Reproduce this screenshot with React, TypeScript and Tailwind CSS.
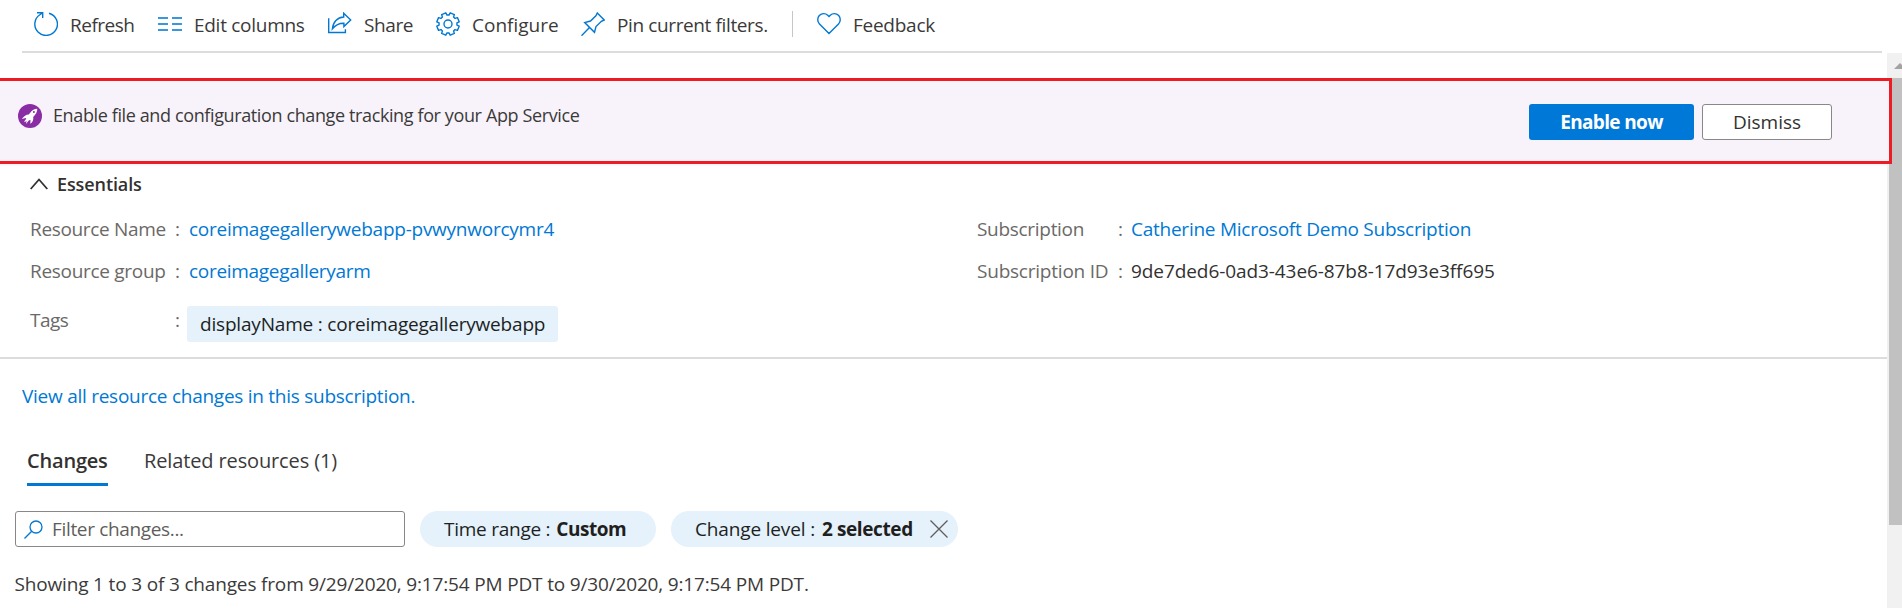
import type { ReactNode } from "react";

const gearPath = (() => {
  const pts: string[] = [];
  const at = (r: number, deg: number) => {
    const a = (deg * Math.PI) / 180;
    return `${(12 + r * Math.cos(a)).toFixed(2)} ${(12 + r * Math.sin(a)).toFixed(2)}`;
  };
  for (let i = 0; i < 8; i++) {
    const c = 22.5 + i * 45;
    pts.push(at(9, c - 16), at(11.4, c - 11.5), at(11.4, c + 11.5), at(9, c + 16));
  }
  return `M${pts.join("L")}Z`;
})();

const svgProps = {
  width: 24,
  height: 24,
  viewBox: "0 0 24 24",
  fill: "none",
  stroke: "#0078d4",
  strokeWidth: 1.4,
  className: "shrink-0",
};

const RefreshIcon = () => (
  <svg {...svgProps}>
    <path d="M15 1.2A11.3 11.3 0 1 1 6.2 2.5L8.6 1M3 .8H8.7V6" />
  </svg>
);

const ColumnsIcon = () => (
  <svg {...svgProps} stroke="#3a96dd" strokeWidth={1.8}>
    <path d="M0 6H10M14 6H24M0 12H10M14 12H24M0 18H10M14 18H24" />
  </svg>
);

const ShareIcon = () => (
  <svg {...svgProps}>
    <path d="M.7 6.3V20.5H17.4V17.3" />
    <path d="M15.7 1.3L22.7 8L15.9 14.6V11.2C10.6 11 7.6 13 4.4 16.8C5 10 9.4 5.4 15.7 5Z" />
  </svg>
);

const GearIcon = () => (
  <svg {...svgProps} strokeLinejoin="round">
    <path d={gearPath} />
    <circle cx="12" cy="12" r="4" />
  </svg>
);

const PinIcon = () => (
  <svg {...svgProps}>
    <path d="M.5 23.7L8.5 15.6M16.3 1L23.2 8L20.4 9.3L15 14.6L13.5 20.3L3.7 10.5L9.5 9L14.9 3.8Z" />
  </svg>
);

const HeartIcon = () => (
  <svg {...svgProps}>
    <path d="M12 21.6L2.5 12C.2 9.500 .2 5.800 2.300 3.500C4.800 .9 8.600 1.100 10.700 3.200L12 4.500L13.300 3.200C15.400 1.100 19.200 .9 21.700 3.500C23.800 5.800 23.800 9.500 21.500 12Z" />
  </svg>
);

const RocketIcon = () => (
  <svg width="24" height="24" viewBox="0 0 24 24" className="shrink-0">
    <circle cx="12" cy="12" r="12" fill="#8a2da5" />
    <path
      fill="#fff"
      d="M19.300 4.800C16.500 4.800 14.200 6.200 12 8.900L10.800 10.400C8.400 10.300 5.800 12 3.800 15L7.800 14L8.300 14.900C6.800 16 6.400 17.300 6.300 18.200L8.600 16.900L7.900 20L11 16.300L12.500 15.900L12.300 19.800C14.800 18 15.700 15.600 15.200 12.900C17.700 10.700 19.300 8 19.300 4.800Z"
    />
    <circle cx="15.9" cy="8.1" r="1" fill="#8a2da5" />
  </svg>
);

function Command({ icon, label, className }: { icon: ReactNode; label: string; className: string }) {
  return (
    <button className={`flex shrink-0 items-center gap-3 whitespace-nowrap text-[#3b3a39] ${className}`}>
      {icon}
      <span className="pt-px">{label}</span>
    </button>
  );
}

export default function App() {
  return (
    <div className="flex h-[608px] w-[1902px] flex-col overflow-hidden bg-white font-['Open_Sans',sans-serif] text-[19px] leading-[26px] whitespace-nowrap text-[#323130]">
      <header className="ml-[22px] flex h-[53px] w-[1860px] shrink-0 border-b-2 border-[#dcdcdc] pl-3">
        <div className="flex h-12 items-center">
          <Command className="w-[124px] tracking-[-0.5px]" icon={<RefreshIcon />} label="Refresh" />
          <Command className="w-[170px] tracking-[-0.28px]" icon={<ColumnsIcon />} label="Edit columns" />
          <Command className="w-[108px] tracking-[-0.4px]" icon={<ShareIcon />} label="Share" />
          <Command className="w-[145px]" icon={<GearIcon />} label="Configure" />
          <Command className="w-[211px] tracking-[-0.38px]" icon={<PinIcon />} label="Pin current filters." />
          <span className="h-[26px] w-px bg-[#c8c6c4]" />
          <Command className="ml-6 tracking-[-0.26px]" icon={<HeartIcon />} label="Feedback" />
        </div>
      </header>

      <div className="flex min-h-0 flex-1">
        <main className="w-[1887px] shrink-0 pt-[25px]">
          <section className="relative z-10 h-[86px] w-[1892px] border-[3px] border-l-0 border-[#ed1c24] bg-[#f8f3fb]">
            <div className="flex h-full items-start pl-[18px]">
              <div className="mt-[23px] flex h-6 items-center gap-[11px]">
                <RocketIcon />
                <span className="pb-0.5 text-[18px] tracking-[-0.38px] text-[#3b3a39]">
                  Enable file and configuration change tracking for your App Service
                </span>
              </div>
              <div className="mt-[23px] mr-[57px] ml-auto flex gap-2">
                <button className="h-9 w-[165px] rounded-[3px] bg-[#0078d7] font-bold tracking-[-0.65px] text-white">
                  Enable now
                </button>
                <button className="h-9 w-[130px] rounded-[3px] border border-[#8a8886] bg-white">Dismiss</button>
              </div>
            </div>
          </section>

          <section className="h-[195px] border-t-2 border-b-2 border-t-[#f9f7fb] border-b-[#dcdcdc] pl-[30px]">
            <h2 className="flex h-[36px] items-center gap-[9px] text-[18px] font-semibold tracking-[-0.1px]">
              <svg width="18" height="12" viewBox="0 0 18 12" fill="none" stroke="#323130" strokeWidth="1.800">
                <path d="M.7 11L9 1.500L17.300 11" />
              </svg>
              Essentials
            </h2>
            <div className="flex pt-[7px]">
              <dl className="grid w-[947px] grid-cols-[150px_1fr] grid-rows-[42px_52px_36px]">
                <dt className="flex h-10 items-center justify-between text-[#6b6967]">
                  <span className="tracking-[-0.34px]">Resource Name</span>:
                </dt>
                <dd className="flex h-10 items-center pl-[9px] tracking-[-0.25px] text-[#0078d4]">
                  coreimagegallerywebapp-pvwynworcymr4
                </dd>
                <dt className="flex h-10 items-center justify-between text-[#6b6967]">
                  <span className="tracking-[-0.3px]">Resource group</span>:
                </dt>
                <dd className="flex h-10 items-center pl-[9px] tracking-[-0.3px] text-[#0078d4]">coreimagegalleryarm</dd>
                <dt className="flex h-8 items-center justify-between pt-px text-[#6b6967]">
                  <span className="tracking-[-0.5px]">Tags</span>:
                </dt>
                <dd className="mt-[3px] ml-[7px] flex h-9 w-[371px] items-center rounded-[3px] bg-[#e5f1fb] pl-[13px] tracking-[-0.19px] text-[#201f1e]">
                  displayName : coreimagegallerywebapp
                </dd>
              </dl>
              <dl className="grid grid-cols-[146px_1fr] grid-rows-[42px_52px]">
                <dt className="flex h-10 items-center justify-between text-[#6b6967]">
                  <span className="tracking-[-0.3px]">Subscription</span>:
                </dt>
                <dd className="flex h-10 items-center pl-2 tracking-[-0.25px] text-[#0078d4]">
                  Catherine Microsoft Demo Subscription
                </dd>
                <dt className="flex h-10 items-center justify-between text-[#6b6967]">
                  <span className="tracking-[-0.22px]">Subscription ID</span>:
                </dt>
                <dd className="flex h-10 items-center pl-2 tracking-[-0.08px]">9de7ded6-0ad3-43e6-87b8-17d93e3ff695</dd>
              </dl>
            </div>
          </section>

          <a className="mt-6 ml-[22px] block w-max tracking-[-0.26px] text-[#0078d4]">
            View all resource changes in this subscription.
          </a>

          <nav className="mt-[35px] ml-[27px] flex h-[42px] gap-9 text-[20px] leading-[33px]">
            <span className="w-[81px] border-b-[3px] border-[#0078d4] font-semibold tracking-[-0.2px]">Changes</span>
            <span className="tracking-[-0.13px] text-[#3b3a39]">Related resources (1)</span>
          </nav>

          <div className="mt-[25px] ml-[15px] flex h-9">
            <div className="flex w-[390px] items-center gap-[9px] rounded-[3px] border border-[#8a8886] pl-2 tracking-[-0.34px] text-[#605e5c]">
              <svg width="19" height="19" viewBox="0 0 19 19" fill="none" stroke="#0078d4" strokeWidth="1.300">
                <circle cx="12" cy="7" r="6" />
                <path d="M7.700 11.300L.5 18.500" />
              </svg>
              Filter changes...
            </div>
            <div className="ml-[15px] flex w-[236px] items-center gap-1.5 rounded-full bg-[#e5f1fb] pl-6 text-[#201f1e]">
              <span className="tracking-[-0.25px]">Time range :</span>
              <span className="font-bold tracking-[-0.500px]">Custom</span>
            </div>
            <div className="ml-[15px] flex w-[287px] items-center gap-[7px] rounded-full bg-[#e5f1fb] pl-6 text-[#201f1e]">
              <span className="tracking-[-0.15px]">Change level :</span>
              <span className="font-bold tracking-[-0.400px]">2 selected</span>
              <svg width="18" height="18" viewBox="0 0 18 18" className="ml-auto mr-[10px]" stroke="#605e5c" strokeWidth="1.300">
                <path d="M.5 .5L17.500 17.500M17.500 .5L.5 17.500" />
              </svg>
            </div>
          </div>

          <p className="mt-6 ml-[14.5px] tracking-[-0.165px] text-[#3b3a39]">
            Showing 1 to 3 of 3 changes from 9/29/2020, 9:17:54 PM PDT to 9/30/2020, 9:17:54 PM PDT.
          </p>
        </main>

        <aside className="flex w-[15px] shrink-0 flex-col bg-[#f1f1f1]">
          <div className="flex h-[25px] shrink-0 items-start overflow-hidden pt-2.5 pl-[7px]">
            <svg width="12" height="6" viewBox="0 0 12 6" className="shrink-0" fill="#a3a3a3">
              <path d="M6 0L12 6H0Z" />
            </svg>
          </div>
          <div className="ml-0.5 h-[447px] bg-[#c1c1c1]" />
        </aside>
      </div>
    </div>
  );
}
